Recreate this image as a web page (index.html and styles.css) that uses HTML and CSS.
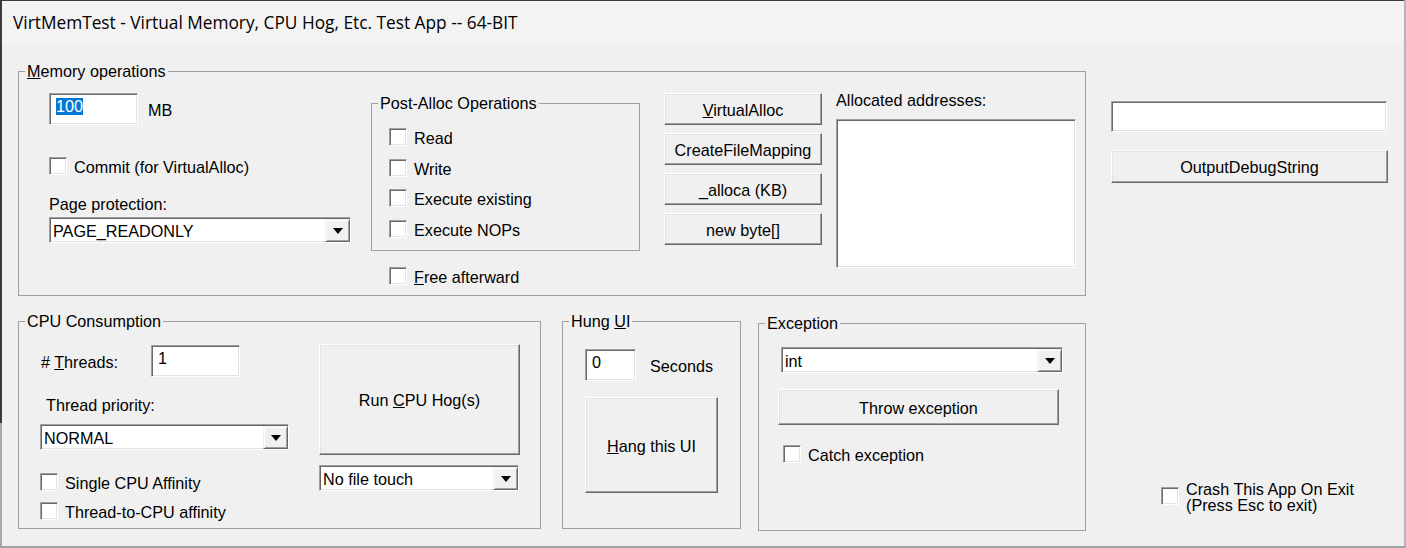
FILE: index.html
```html
<!DOCTYPE html>
<html>
<head>
<meta charset="utf-8">
<title>VirtMemTest</title>
<link rel="stylesheet" href="styles.css">
</head>
<body>
<div class="window">
  <div class="titlebar">VirtMemTest - Virtual Memory, CPU Hog, Etc. Test App -- 64-BIT</div>
  <div class="client">
    <div class="main">
      <fieldset class="group group-mem">
        <legend><u>M</u>emory operations</legend>
        <div class="mem-body">
          <div class="col-size">
            <div class="size-row">
              <div class="edit edit-size"><span class="sel">100</span></div>
              <span class="mb">MB</span>
            </div>
            <div class="check-row commit"><span class="check"></span><span>Commit (for VirtualAlloc)</span></div>
            <div class="field-label page-label">Page protection:</div>
            <div class="combo combo-page"><span class="combo-text">PAGE_READONLY</span><span class="combo-btn"><i class="tri"></i></span></div>
          </div>
          <div class="col-post">
            <fieldset class="group group-post">
              <legend>Post-Alloc Operations</legend>
              <div class="post-body">
                <div class="check-row"><span class="check"></span><span>Read</span></div>
                <div class="check-row"><span class="check"></span><span>Write</span></div>
                <div class="check-row"><span class="check"></span><span>Execute existing</span></div>
                <div class="check-row"><span class="check"></span><span>Execute NOPs</span></div>
              </div>
            </fieldset>
            <div class="check-row free"><span class="check"></span><span><u>F</u>ree afterward</span></div>
          </div>
          <div class="col-buttons">
            <div class="btn"><span><u>V</u>irtualAlloc</span></div>
            <div class="btn">CreateFileMapping</div>
            <div class="btn">_alloca (KB)</div>
            <div class="btn">new byte[]</div>
          </div>
          <div class="col-list">
            <div class="field-label list-label">Allocated addresses:</div>
            <div class="listbox"></div>
          </div>
        </div>
      </fieldset>
      <div class="bottom-row">
        <fieldset class="group group-cpu">
          <legend>CPU Consumption</legend>
          <div class="cpu-body">
            <div class="cpu-left">
              <div class="threads-row">
                <span class="threads-label"># <u>T</u>hreads:</span>
                <div class="edit edit-threads">1</div>
              </div>
              <div class="field-label prio-label">Thread priority:</div>
              <div class="combo combo-prio"><span class="combo-text">NORMAL</span><span class="combo-btn"><i class="tri"></i></span></div>
              <div class="check-row single"><span class="check"></span><span>Single CPU Affinity</span></div>
              <div class="check-row t2c"><span class="check"></span><span>Thread-to-CPU affinity</span></div>
            </div>
            <div class="cpu-right">
              <div class="btn btn-run"><span>Run <u>C</u>PU Hog(s)</span></div>
              <div class="combo combo-touch"><span class="combo-text">No file touch</span><span class="combo-btn"><i class="tri"></i></span></div>
            </div>
          </div>
        </fieldset>
        <fieldset class="group group-hung">
          <legend>Hung <u>U</u>I</legend>
          <div class="hung-body">
            <div class="hung-row">
              <div class="edit edit-hung">0</div>
              <span class="seconds">Seconds</span>
            </div>
            <div class="btn btn-hang"><span><u>H</u>ang this UI</span></div>
          </div>
        </fieldset>
        <fieldset class="group group-exc">
          <legend>Exception</legend>
          <div class="exc-body">
            <div class="combo combo-exc"><span class="combo-text">int</span><span class="combo-btn"><i class="tri"></i></span></div>
            <div class="btn btn-throw">Throw exception</div>
            <div class="check-row catch"><span class="check"></span><span>Catch exception</span></div>
          </div>
        </fieldset>
      </div>
    </div>
    <div class="side">
      <div class="edit edit-debug"></div>
      <div class="btn btn-debug">OutputDebugString</div>
      <div class="check-row crash"><span class="check"></span><span class="crash-text">Crash This App On Exit<br>(Press Esc to exit)</span></div>
    </div>
  </div>
</div>
</body>
</html>
```

FILE: styles.css
```css
* { box-sizing: border-box; }

body {
  margin: 0;
  font-family: "Liberation Sans", Arial, sans-serif;
  font-size: 16.2px;
  color: #000;
}

.window {
  width: 1406px;
  height: 548px;
  display: flex;
  flex-direction: column;
  padding: 1px 0 0 2px;
  background: linear-gradient(#3b3b3b 0 423px, #a7a7a7 423px);
  border-right: 2px solid #b6b6b6;
  border-bottom: 2px solid #a3a3a3;
}

.titlebar {
  flex: none;
  height: 43px;
  background: #f3f3f3;
  padding-left: 11px;
  font-family: "Open Sans", "Noto Sans", sans-serif;
  font-size: 17.3px;
  line-height: 43px;
  color: #000;
}

.client {
  flex: 1;
  background: #f0f0f0;
  display: flex;
  align-items: flex-start;
  padding-left: 16px;
}

.main {
  width: 1068px;
  flex: none;
  padding-top: 19px;
}

.side {
  width: 277px;
  flex: none;
  margin-left: 25px;
  padding-top: 57px;
}

/* group boxes */
.group {
  margin: 0;
  padding: 0;
  min-width: 0;
  border: 1px solid #a0a0a0;
}

.group legend {
  padding: 0 2px;
  margin-left: 6px;
  line-height: 17px;
}

.field-label { line-height: 18px; }

/* 3D controls */
.edit, .listbox, .check, .combo {
  background: #fff;
  border: 1px solid;
  border-color: #a0a0a0 #fff #fff #a0a0a0;
  box-shadow: inset 1px 1px 0 #696969, inset -1px -1px 0 #e3e3e3;
}

.edit {
  padding: 4px 0 0 6px;
  line-height: 17px;
}

.btn {
  height: 32px;
  display: flex;
  align-items: center;
  justify-content: center;
  padding-top: 1px;
  background: #f0f0f0;
  border: 1px solid;
  border-color: #fff #696969 #696969 #fff;
  box-shadow: inset -1px -1px 0 #a0a0a0, inset 1px 1px 0 #e3e3e3;
  line-height: 18px;
}

.check-row {
  display: flex;
  align-items: center;
  line-height: 18px;
}

.check-row > span:last-child { padding-top: 2px; line-height: 16px; }

.check {
  flex: none;
  width: 18px;
  height: 18px;
  margin-right: 7px;
}

.combo {
  display: flex;
  height: 26px;
  padding: 1px 0 0 1px;
}

.combo-text {
  flex: 1;
  padding: 1px 0 0 2px;
  line-height: 22px;
}

.combo-btn {
  flex: none;
  width: 25px;
  height: 23px;
  display: flex;
  align-items: center;
  justify-content: center;
  background: #f0f0f0;
  border: 1px solid;
  border-color: #f0f0f0 #696969 #696969 #f0f0f0;
  box-shadow: inset 1px 1px 0 #fff, inset -1px -1px 0 #a0a0a0;
}

.tri {
  width: 0;
  height: 0;
  border-left: 5px solid transparent;
  border-right: 5px solid transparent;
  border-top: 6px solid #000;
}

/* Memory operations */
.group-mem { height: 233px; }

.mem-body {
  display: flex;
  align-items: flex-start;
  padding-left: 30px;
}

.col-size { width: 302px; flex: none; }

.size-row {
  display: flex;
  align-items: center;
  margin-top: 13px;
}

.edit-size { width: 89px; height: 32px; }

.sel {
  display: inline-block;
  background: #0078d7;
  color: #fff;
  line-height: 17px;
}

.mb { margin-left: 10px; line-height: 18px; padding-top: 2px; }

.commit { margin-top: 32px; }
.page-label { margin-top: 20px; }
.combo-page { margin-top: 4px; width: 302px; }

.col-post { width: 269px; flex: none; margin-left: 20px; margin-top: 15px; }
.group-post { height: 156px; }

.post-body {
  display: flex;
  flex-direction: column;
  gap: 12.6px;
  padding: 16px 0 0 17px;
}

.free { margin-top: 16px; margin-left: 18px; }

.col-buttons {
  width: 158px;
  flex: none;
  margin-left: 24px;
  margin-top: 13px;
  display: flex;
  flex-direction: column;
  gap: 8px;
}

.col-list { width: 240px; flex: none; margin-left: 14px; margin-top: 11px; }
.listbox { margin-top: 10px; height: 149px; }

/* bottom row */
.bottom-row {
  display: flex;
  align-items: flex-start;
  margin-top: 17px;
}

.group-cpu { width: 523px; height: 216px; flex: none; }
.group-hung { width: 179px; height: 216px; flex: none; margin-left: 21px; }
.group-exc { width: 328px; height: 216px; flex: none; margin-left: 17px; margin-top: 2px; }

.cpu-body {
  display: flex;
  align-items: flex-start;
  padding-left: 21px;
}

.cpu-left { width: 249px; flex: none; }

.threads-row {
  display: flex;
  align-items: center;
  margin-top: 15px;
}

.threads-label { width: 111px; padding-left: 1px; line-height: 18px; padding-top: 1px; }
.edit-threads { width: 89px; height: 32px; }

.prio-label { margin-top: 19px; padding-left: 6px; }
.combo-prio { margin-top: 10px; width: 249px; }
.single { margin-top: 23px; }
.t2c { margin-top: 11px; }

.cpu-right { width: 201px; flex: none; margin-left: 30px; }
.btn-run { margin-top: 14px; height: 111px; }
.combo-touch { margin-top: 10px; width: 200px; }

.hung-body { padding-left: 22px; }

.hung-row {
  display: flex;
  align-items: center;
  margin-top: 19px;
}

.edit-hung { width: 51px; height: 32px; }
.seconds { margin-left: 14px; line-height: 18px; padding-top: 2px; }
.btn-hang { width: 133px; height: 96px; margin-top: 16px; }

.exc-body { padding-left: 22px; }
.combo-exc { width: 282px; margin-top: 15px; }
.btn-throw { width: 281px; height: 36px; margin-left: -3px; margin-top: 16px; }
.catch { margin-top: 20px; margin-left: 2px; }

/* side column */
.edit-debug { width: 276px; height: 31px; }
.btn-debug { margin-top: 18px; height: 33px; width: 277px; }

.crash { margin-top: 296px; margin-left: 50px; }
.check-row > .crash-text { line-height: 17px; padding-top: 1px; }
```
